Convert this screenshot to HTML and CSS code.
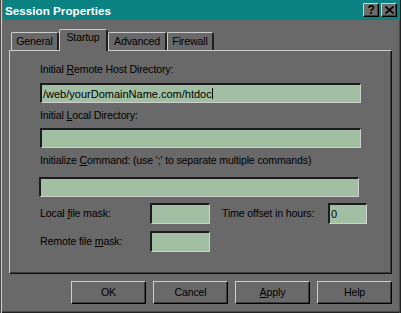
FILE: index.html
```html
<!DOCTYPE html>
<html>
<head>
<meta charset="utf-8">
<title>Session Properties</title>
<link rel="stylesheet" href="styles.css">
</head>
<body>
<div class="window">
  <div class="titlebar">
    <span class="title">Session Properties</span>
    <div class="title-buttons">
      <span class="tbtn">?</span>
      <span class="tbtn">
        <svg width="9" height="8" viewBox="0 0 9 8"><path d="M0.5 0.5 L8.5 7.5 M8.5 0.5 L0.5 7.5" stroke="#000" stroke-width="1.6" fill="none"/></svg>
      </span>
    </div>
  </div>
  <div class="tabs">
    <div class="tab tab-general">General</div>
    <div class="tab tab-startup active">Startup</div>
    <div class="tab tab-advanced">Advanced</div>
    <div class="tab tab-firewall">Firewall</div>
  </div>
  <div class="panel">
    <div class="label l1">Initial <u>R</u>emote Host Directory:</div>
    <div class="field f1"><span class="value">/web/yourDomainName.com/htdoc</span><span class="caret"></span></div>
    <div class="label l2">Initial <u>L</u>ocal Directory:</div>
    <div class="field f2"></div>
    <div class="label l3">Initialize <u>C</u>ommand: (use ';' to separate multiple commands)</div>
    <div class="field f3"></div>
    <div class="mask-row r1">
      <div class="mask-label">Local <u>f</u>ile mask:</div>
      <div class="field mask-input"></div>
      <div class="time-label">Time offset in hours:</div>
      <div class="field time-input"><span class="value">0</span></div>
    </div>
    <div class="mask-row r2">
      <div class="mask-label">Remote file <u>m</u>ask:</div>
      <div class="field mask-input"></div>
    </div>
  </div>
  <div class="buttons">
    <div class="btn">OK</div>
    <div class="btn">Cancel</div>
    <div class="btn"><u>A</u>pply</div>
    <div class="btn">Help</div>
  </div>
</div>
</body>
</html>
```
FILE: styles.css
```css
html, body {
  margin: 0;
  padding: 0;
  background: #696969;
}
body {
  font-family: "Liberation Sans", Arial, sans-serif;
  font-size: 10.6px;
  letter-spacing: -0.15px;
  line-height: 13px;
  color: #000;
}
.window {
  width: 401px;
  height: 313px;
  box-sizing: border-box;
  padding: 0 2px 2px 2px;
  background: #696969;
  box-shadow: inset 1px 0 #4a4a4a, inset 2px 0 #cdcdcd, inset -1px 0 #222, inset -2px 0 #4a4a4a, inset 0 -1px #222, inset 0 -2px #4a4a4a;
  display: flex;
  flex-direction: column;
}
.titlebar {
  height: 20px;
  margin: 0 -1px 0 1px;
  background: #0a8282;
  display: flex;
  align-items: center;
  justify-content: space-between;
  padding: 0 1px 0 2px;
}
.title {
  color: #fff;
  font-weight: bold;
  font-size: 11.7px;
  letter-spacing: 0;
  padding-top: 1px;
}
.title-buttons {
  display: flex;
  gap: 2px;
  margin-right: 2px;
}
.tbtn {
  width: 16px;
  height: 14px;
  box-sizing: border-box;
  background: #6d6d6d;
  border-top: 1px solid #d0d0d0;
  border-left: 1px solid #d0d0d0;
  border-right: 1px solid #000;
  border-bottom: 1px solid #000;
  box-shadow: inset -1px -1px #3c3c3c;
  display: flex;
  align-items: center;
  justify-content: center;
  font-weight: bold;
  font-size: 12px;
  line-height: 12px;
}
.tabs {
  display: flex;
  align-items: flex-end;
  height: 21px;
  margin-top: 9px;
  padding-left: 9px;
}
.tab {
  height: 18px;
  box-sizing: border-box;
  border-top: 1px solid #cdcdcd;
  border-left: 1px solid #cdcdcd;
  border-right: 2px solid #1e1e1e;
  border-radius: 2px 3px 0 0;
  text-align: center;
  padding-top: 2px;
  line-height: 13px;
}
.tab-general { width: 48px; }
.tab-startup { width: 49px; }
.tab-advanced { width: 59px; }
.tab-firewall { width: 47px; }
.tab.active {
  height: 22px;
  padding-top: 1px;
  margin-bottom: -1px;
  background: #696969;
  position: relative;
  z-index: 1;
}
.panel {
  margin-left: 7px;
  width: 383px;
  height: 224px;
  box-sizing: border-box;
  border-top: 1px solid #cdcdcd;
  border-left: 1px solid #cdcdcd;
  border-right: 1px solid #111;
  border-bottom: 1px solid #111;
  box-shadow: inset -1px -1px #3a3a3a;
  padding: 12px 0 0 30px;
}
.label {
  height: 13px;
  white-space: nowrap;
}
.field {
  box-sizing: border-box;
  background: #a3bfa3;
  border-top: 2px solid #1c1c1c;
  border-left: 2px solid #1c1c1c;
  border-right: 1px solid #cfcfcf;
  border-bottom: 1px solid #cfcfcf;
  display: flex;
  align-items: center;
  padding-left: 1px;
  white-space: nowrap;
}
.f1 { width: 321px; height: 20px; margin-top: 7px; }
.l2 { margin-top: 6px; }
.f2 { width: 321px; height: 20px; margin-top: 6px; }
.l3 { margin-top: 6px; }
.f3 { width: 320px; height: 20px; margin-top: 10px; margin-left: -1px; }
.caret {
  width: 1px;
  height: 11px;
  background: #000;
  margin-left: 0;
}
.value {
  padding-top: 1px;
  font-size: 11px;
  letter-spacing: 0;
}
.mask-row {
  display: flex;
  align-items: center;
  height: 21px;
}
.r1 { margin-top: 6px; }
.r2 { margin-top: 7px; }
.mask-label { width: 110px; }
.mask-input { width: 60px; height: 21px; }
.time-label { margin-left: 12px; width: 106px; white-space: nowrap; }
.time-input { width: 39px; height: 21px; }
.buttons {
  display: flex;
  justify-content: flex-end;
  gap: 7px;
  margin-top: 7px;
  padding-right: 7px;
}
.btn {
  width: 75px;
  height: 23px;
  box-sizing: border-box;
  border-top: 1px solid #d0d0d0;
  border-left: 1px solid #d0d0d0;
  border-right: 1px solid #000;
  border-bottom: 1px solid #000;
  box-shadow: inset -1px -1px #3c3c3c;
  display: flex;
  align-items: center;
  justify-content: center;
}
u { text-decoration: underline; text-underline-offset: 1px; }
```
